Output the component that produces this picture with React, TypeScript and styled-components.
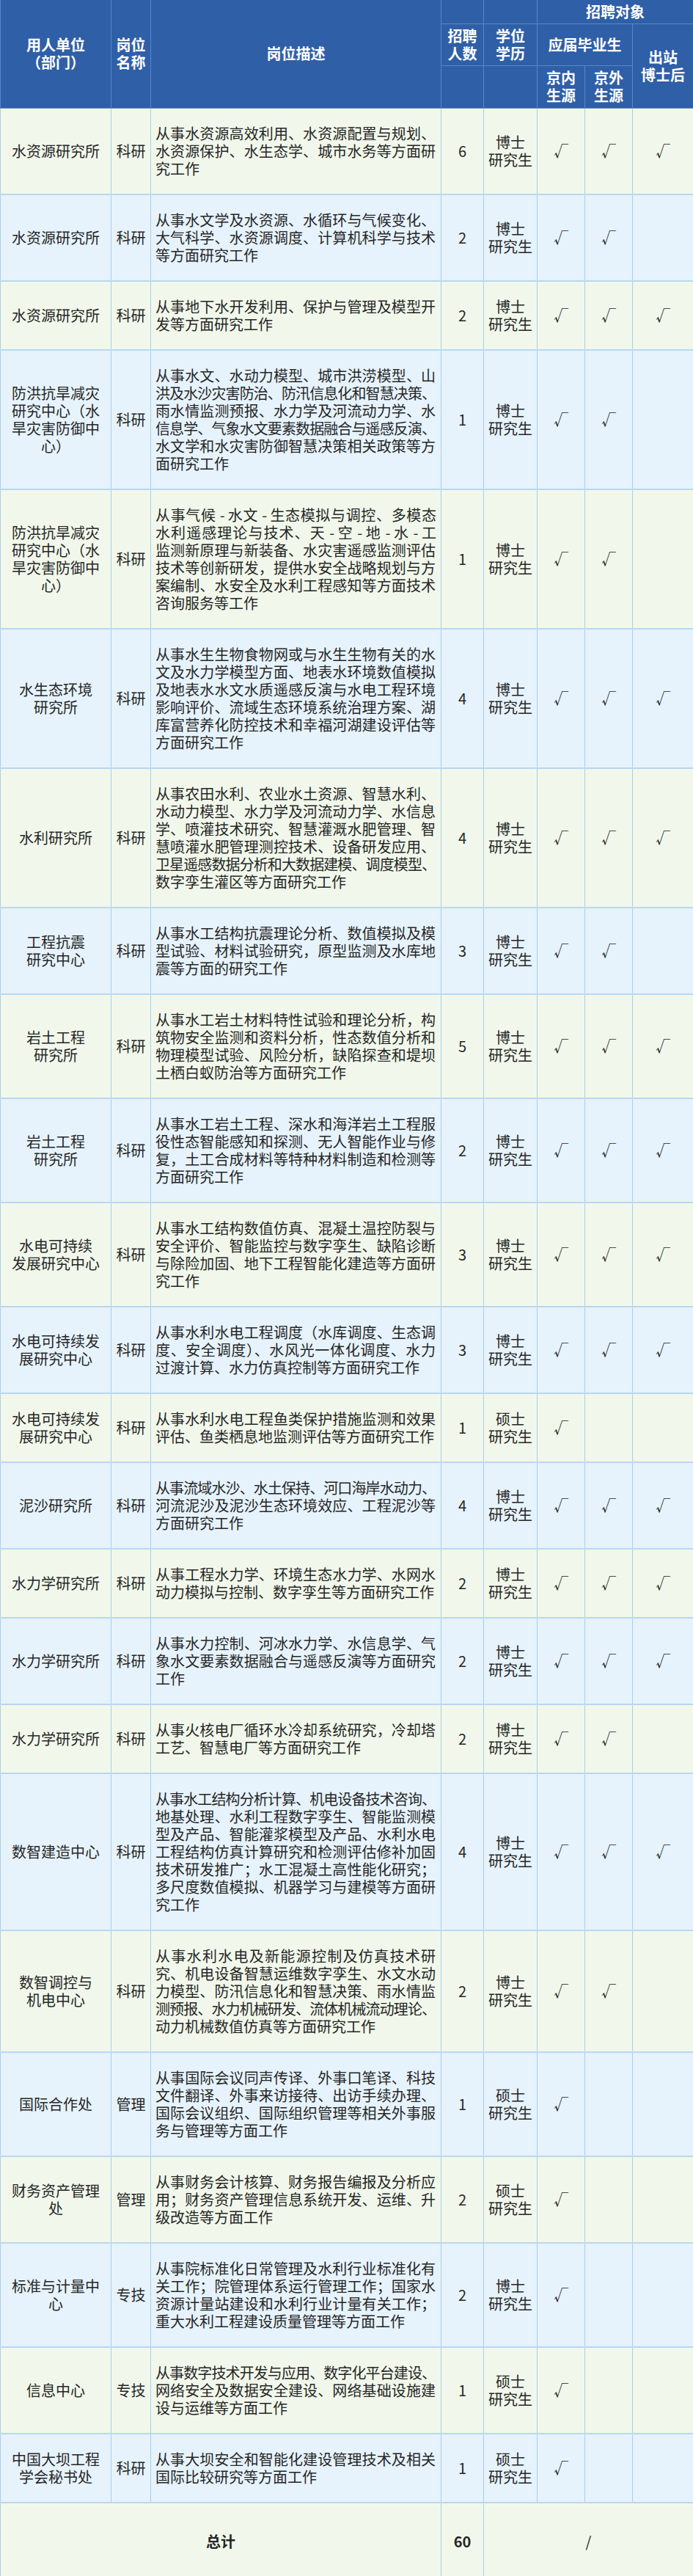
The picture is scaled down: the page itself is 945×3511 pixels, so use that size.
import React from 'react';
import styled, { createGlobalStyle } from 'styled-components';

type Position = {
  unit: string[];
  kind: string;
  desc: string[];
  count: number;
  degree: string;
  checks: [boolean, boolean, boolean];
};

const positions: Position[] = [
  {
    unit: ['水资源研究所'],
    kind: '科研',
    desc: ['从事水资源高效利用、水资源配置与规划、', '水资源保护、水生态学、城市水务等方面研', '究工作'],
    count: 6,
    degree: '博士',
    checks: [true, true, true]
  },
  {
    unit: ['水资源研究所'],
    kind: '科研',
    desc: ['从事水文学及水资源、水循环与气候变化、', '大气科学、水资源调度、计算机科学与技术', '等方面研究工作'],
    count: 2,
    degree: '博士',
    checks: [true, true, false]
  },
  {
    unit: ['水资源研究所'],
    kind: '科研',
    desc: ['从事地下水开发利用、保护与管理及模型开', '发等方面研究工作'],
    count: 2,
    degree: '博士',
    checks: [true, true, true]
  },
  {
    unit: ['防洪抗旱减灾', '研究中心（水', '旱灾害防御中', '心）'],
    kind: '科研',
    desc: [
      '从事水文、水动力模型、城市洪涝模型、山',
      '洪及水沙灾害防治、防汛信息化和智慧决策、',
      '雨水情监测预报、水力学及河流动力学、水',
      '信息学、气象水文要素数据融合与遥感反演、',
      '水文学和水灾害防御智慧决策相关政策等方',
      '面研究工作'
    ],
    count: 1,
    degree: '博士',
    checks: [true, true, false]
  },
  {
    unit: ['防洪抗旱减灾', '研究中心（水', '旱灾害防御中', '心）'],
    kind: '科研',
    desc: [
      '从事气候 - 水文 - 生态模拟与调控、多模态',
      '水利遥感理论与技术、天 - 空 - 地 - 水 - 工',
      '监测新原理与新装备、水灾害遥感监测评估',
      '技术等创新研发，提供水安全战略规划与方',
      '案编制、水安全及水利工程感知等方面技术',
      '咨询服务等工作'
    ],
    count: 1,
    degree: '博士',
    checks: [true, true, false]
  },
  {
    unit: ['水生态环境', '研究所'],
    kind: '科研',
    desc: [
      '从事水生生物食物网或与水生生物有关的水',
      '文及水力学模型方面、地表水环境数值模拟',
      '及地表水水文水质遥感反演与水电工程环境',
      '影响评价、流域生态环境系统治理方案、湖',
      '库富营养化防控技术和幸福河湖建设评估等',
      '方面研究工作'
    ],
    count: 4,
    degree: '博士',
    checks: [true, true, true]
  },
  {
    unit: ['水利研究所'],
    kind: '科研',
    desc: [
      '从事农田水利、农业水土资源、智慧水利、',
      '水动力模型、水力学及河流动力学、水信息',
      '学、喷灌技术研究、智慧灌溉水肥管理、智',
      '慧喷灌水肥管理测控技术、设备研发应用、',
      '卫星遥感数据分析和大数据建模、调度模型、',
      '数字孪生灌区等方面研究工作'
    ],
    count: 4,
    degree: '博士',
    checks: [true, true, true]
  },
  {
    unit: ['工程抗震', '研究中心'],
    kind: '科研',
    desc: ['从事水工结构抗震理论分析、数值模拟及模', '型试验、材料试验研究，原型监测及水库地', '震等方面的研究工作'],
    count: 3,
    degree: '博士',
    checks: [true, true, false]
  },
  {
    unit: ['岩土工程', '研究所'],
    kind: '科研',
    desc: [
      '从事水工岩土材料特性试验和理论分析，构',
      '筑物安全监测和资料分析，性态数值分析和',
      '物理模型试验、风险分析，缺陷探查和堤坝',
      '土栖白蚁防治等方面研究工作'
    ],
    count: 5,
    degree: '博士',
    checks: [true, true, true]
  },
  {
    unit: ['岩土工程', '研究所'],
    kind: '科研',
    desc: [
      '从事水工岩土工程、深水和海洋岩土工程服',
      '役性态智能感知和探测、无人智能作业与修',
      '复，土工合成材料等特种材料制造和检测等',
      '方面研究工作'
    ],
    count: 2,
    degree: '博士',
    checks: [true, true, true]
  },
  {
    unit: ['水电可持续', '发展研究中心'],
    kind: '科研',
    desc: [
      '从事水工结构数值仿真、混凝土温控防裂与',
      '安全评价、智能监控与数字孪生、缺陷诊断',
      '与除险加固、地下工程智能化建造等方面研',
      '究工作'
    ],
    count: 3,
    degree: '博士',
    checks: [true, true, true]
  },
  {
    unit: ['水电可持续发', '展研究中心'],
    kind: '科研',
    desc: ['从事水利水电工程调度（水库调度、生态调', '度、安全调度）、水风光一体化调度、水力', '过渡计算、水力仿真控制等方面研究工作'],
    count: 3,
    degree: '博士',
    checks: [true, true, true]
  },
  {
    unit: ['水电可持续发', '展研究中心'],
    kind: '科研',
    desc: ['从事水利水电工程鱼类保护措施监测和效果', '评估、鱼类栖息地监测评估等方面研究工作'],
    count: 1,
    degree: '硕士',
    checks: [true, false, false]
  },
  {
    unit: ['泥沙研究所'],
    kind: '科研',
    desc: ['从事流域水沙、水土保持、河口海岸水动力、', '河流泥沙及泥沙生态环境效应、工程泥沙等', '方面研究工作'],
    count: 4,
    degree: '博士',
    checks: [true, true, true]
  },
  {
    unit: ['水力学研究所'],
    kind: '科研',
    desc: ['从事工程水力学、环境生态水力学、水网水', '动力模拟与控制、数字孪生等方面研究工作'],
    count: 2,
    degree: '博士',
    checks: [true, true, true]
  },
  {
    unit: ['水力学研究所'],
    kind: '科研',
    desc: ['从事水力控制、河冰水力学、水信息学、气', '象水文要素数据融合与遥感反演等方面研究', '工作'],
    count: 2,
    degree: '博士',
    checks: [true, true, true]
  },
  {
    unit: ['水力学研究所'],
    kind: '科研',
    desc: ['从事火核电厂循环水冷却系统研究，冷却塔', '工艺、智慧电厂等方面研究工作'],
    count: 2,
    degree: '博士',
    checks: [true, true, false]
  },
  {
    unit: ['数智建造中心'],
    kind: '科研',
    desc: [
      '从事水工结构分析计算、机电设备技术咨询、',
      '地基处理、水利工程数字孪生、智能监测模',
      '型及产品、智能灌浆模型及产品、水利水电',
      '工程结构仿真计算研究和检测评估修补加固',
      '技术研发推广；水工混凝土高性能化研究；',
      '多尺度数值模拟、机器学习与建模等方面研',
      '究工作'
    ],
    count: 4,
    degree: '博士',
    checks: [true, true, true]
  },
  {
    unit: ['数智调控与', '机电中心'],
    kind: '科研',
    desc: [
      '从事水利水电及新能源控制及仿真技术研',
      '究、机电设备智慧运维数字孪生、水文水动',
      '力模型、防汛信息化和智慧决策、雨水情监',
      '测预报、水力机械研发、流体机械流动理论、',
      '动力机械数值仿真等方面研究工作'
    ],
    count: 2,
    degree: '博士',
    checks: [true, true, false]
  },
  {
    unit: ['国际合作处'],
    kind: '管理',
    desc: [
      '从事国际会议同声传译、外事口笔译、科技',
      '文件翻译、外事来访接待、出访手续办理、',
      '国际会议组织、国际组织管理等相关外事服',
      '务与管理等方面工作'
    ],
    count: 1,
    degree: '硕士',
    checks: [true, false, false]
  },
  {
    unit: ['财务资产管理', '处'],
    kind: '管理',
    desc: ['从事财务会计核算、财务报告编报及分析应', '用；财务资产管理信息系统开发、运维、升', '级改造等方面工作'],
    count: 2,
    degree: '硕士',
    checks: [true, false, false]
  },
  {
    unit: ['标准与计量中', '心'],
    kind: '专技',
    desc: [
      '从事院标准化日常管理及水利行业标准化有',
      '关工作；院管理体系运行管理工作；国家水',
      '资源计量站建设和水利行业计量有关工作；',
      '重大水利工程建设质量管理等方面工作'
    ],
    count: 2,
    degree: '博士',
    checks: [true, false, false]
  },
  {
    unit: ['信息中心'],
    kind: '专技',
    desc: ['从事数字技术开发与应用、数字化平台建设、', '网络安全及数据安全建设、网络基础设施建', '设与运维等方面工作'],
    count: 1,
    degree: '硕士',
    checks: [true, false, false]
  },
  {
    unit: ['中国大坝工程', '学会秘书处'],
    kind: '科研',
    desc: ['从事大坝安全和智能化建设管理技术及相关', '国际比较研究等方面工作'],
    count: 1,
    degree: '硕士',
    checks: [true, false, false]
  }
];

const GlobalStyle = createGlobalStyle`
  html, body {
    margin: 0;
    padding: 0;
    background: #ffffff;
  }
  body {
    font-family: "Noto Sans CJK SC", "Noto Sans", sans-serif;
    color: #262626;
  }
`;

const Table = styled.table`
  width: 945px;
  border-collapse: collapse;
  table-layout: fixed;
  font-size: 20px;
  line-height: 24px;
`;

const HeadRow = styled.tr<{ $height: number }>`
  height: ${p => p.$height}px;
`;

const HeadCell = styled.th`
  background: #2f5fa7;
  color: #ffffff;
  font-weight: 700;
  border: 1px solid #5b86c3;
  border-top: none;
  padding: 0;
  text-align: center;
  vertical-align: middle;
`;

const BodyRow = styled.tr<{ $alt: boolean }>`
  background: ${p => (p.$alt ? '#e6f3fc' : '#f1f8eb')};
`;

const Cell = styled.td`
  border: 1px solid #aacde9;
  border-bottom: 2px solid #b9d8ef;
  padding: 22px 0;
  text-align: center;
  vertical-align: middle;
`;

const UnitCell = styled(Cell)`
  padding-left: 6px;
  padding-right: 6px;
`;

const DescCell = styled(Cell)`
  text-align: left;
  padding-left: 6px;
  padding-right: 7px;
`;

const DescLine = styled.span<{ $last: boolean; $tight: boolean }>`
  display: block;
  white-space: nowrap;
  text-align: ${p => (p.$last ? 'left' : 'justify')};
  text-align-last: ${p => (p.$last ? 'left' : 'justify')};
  letter-spacing: ${p => (p.$tight ? '-1px' : '0')};
`;

const Line = styled.span`
  display: block;
`;

const TotalRow = styled.tr`
  height: 105px;
  background: #f1f8eb;
`;

const TotalCell = styled.td<{ $bold?: boolean }>`
  border: 1px solid #aacde9;
  border-bottom: none;
  text-align: center;
  vertical-align: middle;
  font-weight: ${p => (p.$bold ? 700 : 400)};
  padding: 0;
`;

const Check = () => <>√</>;

const Lines = ({ items }: { items: string[] }) => (
  <>
    {items.map((t, i) => (
      <Line key={i}>{t}</Line>
    ))}
  </>
);

export default function App() {
  return (
    <>
      <GlobalStyle />
      <Table>
        <colgroup>
          <col style={{ width: 151 }} />
          <col style={{ width: 54 }} />
          <col style={{ width: 396 }} />
          <col style={{ width: 58 }} />
          <col style={{ width: 73 }} />
          <col style={{ width: 65 }} />
          <col style={{ width: 65 }} />
          <col style={{ width: 83 }} />
        </colgroup>
        <thead>
          <HeadRow $height={32}>
            <HeadCell rowSpan={3}>
              <Lines items={['用人单位', '（部门）']} />
            </HeadCell>
            <HeadCell rowSpan={3}>
              <Lines items={['岗位', '名称']} />
            </HeadCell>
            <HeadCell rowSpan={3}>岗位描述</HeadCell>
            <HeadCell />
            <HeadCell />
            <HeadCell colSpan={3}>招聘对象</HeadCell>
          </HeadRow>
          <HeadRow $height={57}>
            <HeadCell>
              <Lines items={['招聘', '人数']} />
            </HeadCell>
            <HeadCell>
              <Lines items={['学位', '学历']} />
            </HeadCell>
            <HeadCell colSpan={2}>应届毕业生</HeadCell>
            <HeadCell rowSpan={2}>
              <Lines items={['出站', '博士后']} />
            </HeadCell>
          </HeadRow>
          <HeadRow $height={58}>
            <HeadCell />
            <HeadCell />
            <HeadCell>
              <Lines items={['京内', '生源']} />
            </HeadCell>
            <HeadCell>
              <Lines items={['京外', '生源']} />
            </HeadCell>
          </HeadRow>
        </thead>
        <tbody>
          {positions.map((p, i) => (
            <BodyRow key={i} $alt={i % 2 === 1}>
              <UnitCell>
                <Lines items={p.unit} />
              </UnitCell>
              <Cell>{p.kind}</Cell>
              <DescCell>
                {p.desc.map((line, j) => (
                  <DescLine key={j} $last={j === p.desc.length - 1} $tight={Array.from(line).length > 19}>
                    {line}
                  </DescLine>
                ))}
              </DescCell>
              <Cell>{p.count}</Cell>
              <Cell>
                <Lines items={[p.degree, '研究生']} />
              </Cell>
              {p.checks.map((c, k) => (
                <Cell key={k}>{c ? <Check /> : null}</Cell>
              ))}
            </BodyRow>
          ))}
          <TotalRow>
            <TotalCell colSpan={3} $bold>
              总计
            </TotalCell>
            <TotalCell $bold>60</TotalCell>
            <TotalCell colSpan={4}>/</TotalCell>
          </TotalRow>
        </tbody>
      </Table>
    </>
  );
}
